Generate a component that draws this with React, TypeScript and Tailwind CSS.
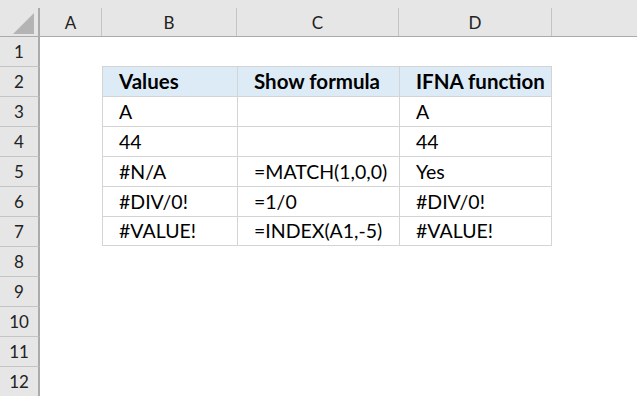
import React from 'react';

// Sheet layout: row header + columns A..E
const COLS = ['A', 'B', 'C', 'D'];

const table: string[][] = [
  ['Values', 'Show formula', 'IFNA function'],
  ['A', '', 'A'],
  ['44', '', '44'],
  ['#N/A', '=MATCH(1,0,0)', 'Yes'],
  ['#DIV/0!', '=1/0', '#DIV/0!'],
  ['#VALUE!', '=INDEX(A1,-5)', '#VALUE!'],
];

const grid = 'grid grid-cols-[40px_62px_135px_162px_153px_1fr]';

function ColumnHeader() {
  return (
    <div className="bg-[#e6e6e6] pt-2 border-b border-[#ababab]">
      <div className={`${grid} h-[28px]`}>
        {/* select-all corner */}
        <div className="relative border-r-2 border-[#ababab]">
          <svg className="absolute right-[4px] bottom-[2px]" width="21" height="21" viewBox="0 0 21 21">
            <polygon points="21,0 21,21 0,21" fill="#b4b4b4" />
          </svg>
        </div>
        {COLS.map((c) => (
          <div key={c} className="flex items-center justify-center border-r border-[#c4c4c4] text-[17px] text-[#222]">
            {c}
          </div>
        ))}
        <div />
      </div>
    </div>
  );
}

function RowNum({ n }: { n: number }) {
  return (
    <div
      className={`flex items-center justify-center bg-[#e6e6e6] border-r-2 border-r-[#ababab] text-[17px] text-[#222] ${
        n > 1 ? 'border-t border-t-[#c4c4c4]' : ''
      }`}
    >
      {n}
    </div>
  );
}

function Cell({ text, head, last, bottom }: { text: string; head?: boolean; last?: boolean; bottom?: boolean }) {
  return (
    <div
      className={`flex items-end pb-[5px] pl-4 border-l border-t border-[#d4d4d4] whitespace-nowrap ${
        last ? 'border-r' : ''
      } ${bottom ? 'border-b' : ''} ${head ? 'bg-[#ddebf7] font-bold text-[20.5px]' : ''}`}
    >
      {text}
    </div>
  );
}

export default function App() {
  const rows = Array.from({ length: 12 }, (_, i) => i + 1);
  return (
    <div
      className="w-[637px] h-[397px] overflow-hidden bg-white text-black text-[19.5px] leading-none"
      style={{ fontFamily: 'Lato, "Open Sans", sans-serif' }}
    >
      <ColumnHeader />
      {rows.map((n) => {
        const data = n >= 2 && n <= 7 ? table[n - 2] : null;
        return (
          <div key={n} className={`${grid} ${n === 1 ? 'h-[29px]' : 'h-[30px]'}`}>
            <RowNum n={n} />
            <div />
            {data ? (
              data.map((t, i) => (
                <Cell key={i} text={t} head={n === 2} last={i === 2} bottom={n === 7} />
              ))
            ) : (
              <>
                <div />
                <div />
                <div />
              </>
            )}
            <div />
          </div>
        );
      })}
    </div>
  );
}
